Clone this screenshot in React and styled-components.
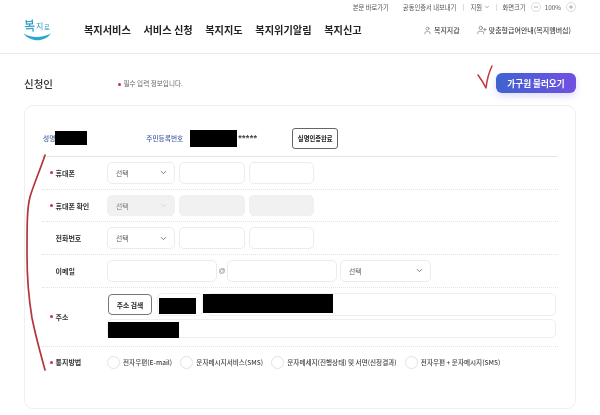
import React from 'react';
import styled, { createGlobalStyle } from 'styled-components';
import { ChevronDown, Minus, Plus, User, UserPlus } from 'lucide-react';

const GlobalStyle = createGlobalStyle`
  html, body {
    margin: 0;
    padding: 0;
    background: #fff;
    font-family: "Noto Sans CJK KR", "Noto Sans", sans-serif;
  }
  * { box-sizing: border-box; }
`;

const Page = styled.div`
  position: relative;
  width: 600px;
  height: 415px;
  overflow: hidden;
  background: #fff;
  color: #222;
  filter: blur(0.3px);
`;

const Header = styled.header`
  height: 54px;
  padding: 0 24px 0 23px;
  border-bottom: 1px solid #e9e9e9;
`;

const UtilBar = styled.div`
  height: 14px;
  display: flex;
  align-items: center;
  justify-content: flex-end;
  font-size: 6.3px;
  color: #555;
  white-space: nowrap;
`;

const UtilLink = styled.span`
  margin-left: ${p => p.$gap || 0}px;
`;

const UtilSep = styled.i`
  width: 1px;
  height: 7px;
  background: #ddd;
  margin: 0 ${p => p.$m}px;
  flex: none;
`;

const ZoomBtn = styled.span`
  flex: none;
  width: 10px;
  height: 10px;
  display: inline-flex;
  align-items: center;
  justify-content: center;
  border: 1px solid #ddd;
  border-radius: 50%;
  color: #666;
  margin: 0 ${p => p.$right || 0}px 0 ${p => p.$left || 0}px;
`;

const UtilChevron = styled(ChevronDown)`
  margin-left: 2px;
  flex: none;
`;

const MainBar = styled.div`
  display: flex;
  align-items: center;
  height: 30px;
`;

const Logo = styled.svg`
  width: 30px;
  height: 26px;
  margin-right: 31px;
  flex: none;
`;

const Nav = styled.nav`
  display: flex;
  gap: 12.6px;
  font-size: 10.2px;
  font-weight: 700;
  color: #222;
  white-space: nowrap;
`;

const MyMenu = styled.div`
  margin: 2px 5px 0 auto;
  display: flex;
  align-items: center;
  font-size: 7px;
  font-weight: 500;
  color: #444;
  white-space: nowrap;
`;

const MyItem = styled.span`
  display: flex;
  align-items: center;
  gap: 2px;
  margin-left: 17px;
`;

const TitleRow = styled.div`
  display: flex;
  align-items: center;
  padding: 19px 24px 12px;
`;

const Title = styled.h2`
  width: 94px;
  margin: 0;
  font-size: 10.5px;
  font-weight: 500;
  color: #333;
`;

const Note = styled.span`
  font-size: 6.6px;
  color: #666;
`;

const Star = styled.i`
  display: inline-block;
  width: 3px;
  height: 3px;
  border-radius: 50%;
  background: #c2334d;
  vertical-align: middle;
  margin-right: 2.5px;
  flex: none;
`;

const LoadButton = styled.button`
  margin-left: auto;
  width: 80px;
  height: 20px;
  padding: 0;
  border: 0;
  border-radius: 6px;
  background: linear-gradient(90deg, #3f63cf, #7150e2);
  box-shadow: 0 3px 7px rgba(100, 90, 220, 0.22);
  color: #fff;
  font: 700 8.6px "Noto Sans CJK KR", sans-serif;
`;

const Card = styled.section`
  margin: 0 24px;
  height: 304px;
  padding: 20px 17px 0;
  background: #fff;
  border: 1px solid #efefef;
  border-radius: 9px;
`;

const NameRow = styled.div`
  height: 31px;
  display: flex;
  align-items: center;
  border-bottom: 1px solid #e6e6e6;
  padding-bottom: 6px;
  font-size: 6.7px;
  font-weight: 500;
`;

const NameLabel = styled.span`
  color: #46609f;
  white-space: nowrap;
  margin-left: ${p => p.$left || 0}px;
`;

const Redact = styled.span`
  display: block;
  flex: none;
  background: #000;
  width: ${p => p.$w}px;
  height: ${p => p.$h}px;
  margin: ${p => p.$m || 0};
`;

const Masked = styled.span`
  font: 700 9px "Liberation Sans", sans-serif;
  letter-spacing: 0.3px;
  color: #444;
  width: 54px;
`;

const AuthButton = styled.button`
  width: 46px;
  height: 21px;
  padding: 0;
  background: #fff;
  border: 1px solid #666;
  border-radius: 3px;
  color: #222;
  font: 700 6.3px "Noto Sans CJK KR", sans-serif;
  white-space: nowrap;
`;

const Row = styled.div`
  display: flex;
  align-items: center;
  height: ${p => p.$h || 32.7}px;
  padding-left: 8px;
  border-bottom: ${p => (p.$last ? 0 : '1px dotted #e3e3e3')};
`;

const Label = styled.div`
  width: 57px;
  flex: none;
  display: flex;
  align-items: center;
  font-size: 7px;
  font-weight: 700;
  color: #333;
  white-space: nowrap;
  padding-left: ${p => (p.$req ? 0 : 5.5)}px;
`;

const Fields = styled.div`
  display: flex;
  align-items: center;
  gap: ${p => p.$gap ?? 4}px;
`;

const Input = styled.input`
  flex: none;
  width: ${p => p.$w}px;
  height: 21.5px;
  border: 1px solid ${p => (p.disabled ? '#f0f0f0' : '#ececec')};
  border-radius: 5px;
  background: ${p => (p.disabled ? '#f1f1f1' : '#fff')};
  outline: 0;
`;

const Select = styled.div`
  flex: none;
  width: ${p => p.$w}px;
  height: 21.5px;
  display: flex;
  align-items: center;
  justify-content: space-between;
  padding: 0 6px 0 8px;
  border: 1px solid ${p => (p.$off ? '#f0f0f0' : '#ececec')};
  border-radius: 5px;
  background: ${p => (p.$off ? '#f1f1f1' : '#fff')};
  color: ${p => (p.$off ? '#777' : '#555')};
  font-size: 6.8px;
`;

const At = styled.span`
  width: 10px;
  text-align: center;
  font: 7px "Liberation Sans", sans-serif;
  color: #888;
`;

const EmailSelect = styled(Select)`
  margin-left: 3px;
`;

const AddressBlock = styled.div`
  display: flex;
  flex-direction: column;
  gap: 3px;
  margin-top: -2px;
`;

const AddressLine = styled.div`
  display: flex;
  align-items: center;
  gap: 4px;
`;

const SearchButton = styled.button`
  width: 44px;
  height: 21px;
  margin: 0 1px;
  padding: 0;
  background: #fff;
  border: 1px solid #777;
  border-radius: 4px;
  color: #222;
  font: 700 6.8px "Noto Sans CJK KR", sans-serif;
`;

const Box = styled.div`
  position: relative;
  flex: none;
  width: ${p => p.$w}px;
  height: ${p => p.$h}px;
  border: 1px solid #efefef;
  border-radius: 5px;
  background: #fff;
`;

const Cover = styled.span`
  position: absolute;
  background: #000;
  left: ${p => p.$l}px;
  top: ${p => p.$t}px;
  width: ${p => p.$w}px;
  height: ${p => p.$h}px;
`;

const Radios = styled.div`
  display: flex;
  align-items: center;
  font-size: 6.6px;
  font-weight: 500;
  color: #444;
  white-space: nowrap;
`;

const Radio = styled.label`
  display: flex;
  align-items: center;
  gap: 3px;
  margin-right: 8.2px;
  &::before {
    content: '';
    width: 11px;
    height: 11px;
    border: 1px solid #e2e2e2;
    border-radius: 50%;
  }
`;

const Marks = styled.svg`
  position: absolute;
  left: 0;
  top: 0;
  width: 600px;
  height: 415px;
  pointer-events: none;
`;

const NAV = ['복지서비스', '서비스 신청', '복지지도', '복지위기알림', '복지신고'];
const NOTICE = [
  '전자우편(E-mail)',
  '문자메시지서비스(SMS)',
  '문자메세지(진행상태) 및 서면(신청결과)',
  '전자우편 + 문자메시지(SMS)',
];

const Chevron = ({ off }) => (
  <ChevronDown size={9} strokeWidth={2} color={off ? '#ccc' : '#555'} />
);

const PhoneFields = ({ off }) => (
  <Fields>
    <Select $w={68} $off={off}>선택<Chevron off={off} /></Select>
    <Input $w={66} disabled={off} />
    <Input $w={65} disabled={off} />
  </Fields>
);

export default function App() {
  return (
    <Page>
      <GlobalStyle />
      <Header>
        <UtilBar>
          <UtilLink>본문 바로가기</UtilLink>
          <UtilLink $gap={14}>공동인증서 내보내기</UtilLink>
          <UtilSep $m={6.5} />
          <UtilLink>지원</UtilLink>
          <UtilChevron size={6} />
          <UtilSep $m={5.75} />
          <UtilLink>화면크기</UtilLink>
          <ZoomBtn $left={5} $right={4}><Minus size={6} /></ZoomBtn>
          <UtilLink>100%</UtilLink>
          <ZoomBtn $left={5}><Plus size={6} /></ZoomBtn>
        </UtilBar>
        <MainBar>
          <Logo viewBox="0 0 30 26">
            <text x="1" y="13" fontSize="12" fontWeight="500" fill="#2f9fc6" fontFamily="Noto Sans CJK KR" transform="rotate(-4 6 8) scale(1 1.15)">복</text>
            <text x="13" y="13" fontSize="8" fill="#2f9fc6" fontFamily="Noto Sans CJK KR">지</text>
            <text x="21" y="14" fontSize="6.5" fill="#2f9fc6" fontFamily="Noto Sans CJK KR">로</text>
            <path d="M0.5 17.5 C8 22 19 22 28 17.5 C21 27 7 26 0.5 17.5Z" fill="#2ea6d0" />
          </Logo>
          <Nav>
            {NAV.map(item => <span key={item}>{item}</span>)}
          </Nav>
          <MyMenu>
            <MyItem><User size={9} strokeWidth={1.2} />복지지갑</MyItem>
            <MyItem><UserPlus size={10} strokeWidth={1.2} />맞춤형급여안내(복지멤버십)</MyItem>
          </MyMenu>
        </MainBar>
      </Header>

      <TitleRow>
        <Title>신청인</Title>
        <Note><Star />필수 입력 정보입니다.</Note>
        <LoadButton>가구원 불러오기</LoadButton>
      </TitleRow>

      <Card>
        <NameRow>
          <NameLabel $left={1}>성명</NameLabel>
          <Redact $w={32} $h={14} />
          <NameLabel $left={59}>주민등록번호</NameLabel>
          <Redact $w={47} $h={17} $m="0 1px 0 7px" />
          <Masked>*****</Masked>
          <AuthButton>실명인증완료</AuthButton>
        </NameRow>

        <Row>
          <Label $req><Star />휴대폰</Label>
          <PhoneFields />
        </Row>
        <Row>
          <Label $req><Star />휴대폰 확인</Label>
          <PhoneFields off />
        </Row>
        <Row>
          <Label>전화번호</Label>
          <PhoneFields />
        </Row>
        <Row>
          <Label>이메일</Label>
          <Fields $gap={0}>
            <Input $w={110} />
            <At>@</At>
            <Input $w={110} />
            <EmailSelect $w={91}>선택<Chevron /></EmailSelect>
          </Fields>
        </Row>
        <Row $h={59}>
          <Label $req><Star />주소</Label>
          <AddressBlock>
            <AddressLine>
              <SearchButton>주소 검색</SearchButton>
              <Box $w={46} $h={23}>
                <Cover $l={1} $t={4} $w={37} $h={16} />
              </Box>
              <Box $w={349} $h={23}>
                <Cover $l={-5} $t={0} $w={130} $h={19} />
              </Box>
            </AddressLine>
            <Box $w={449} $h={19}>
              <Cover $l={0} $t={2} $w={71} $h={16} />
            </Box>
          </AddressBlock>
        </Row>
        <Row $h={31} $last>
          <Label $req><Star />통지방법</Label>
          <Radios>
            {NOTICE.map(text => <Radio key={text}>{text}</Radio>)}
          </Radios>
        </Row>
      </Card>

      <Marks viewBox="0 0 600 415">
        <path d="M45 155 C41 168 33 186 30 197 C27 208 27 225 27 255 C27 285 29 300 32 318 C36 338 41 355 45 370" fill="none" stroke="#b5343d" strokeWidth="1.7" strokeLinecap="round" />
        <path d="M478 75 C481 79 484 84 486 88 C487 80 489 72 492 66" fill="none" stroke="#c4343b" strokeWidth="1.5" strokeLinecap="round" strokeLinejoin="round" />
      </Marks>
    </Page>
  );
}
